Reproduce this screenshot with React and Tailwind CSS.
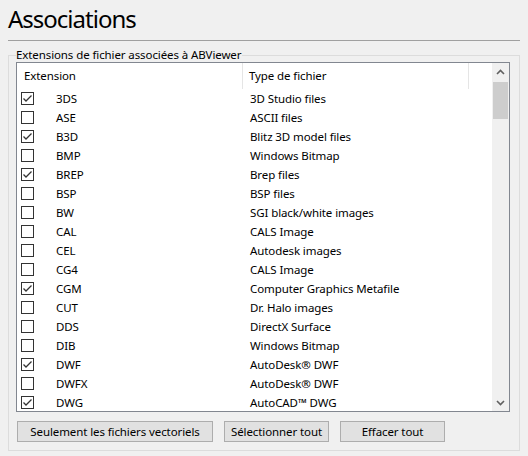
import React, { useState } from "react";

const ROWS = [
  ["3DS", "3D Studio files", true],
  ["ASE", "ASCII files", false],
  ["B3D", "Blitz 3D model files", true],
  ["BMP", "Windows Bitmap", false],
  ["BREP", "Brep files", true],
  ["BSP", "BSP files", false],
  ["BW", "SGI black/white images", false],
  ["CAL", "CALS Image", false],
  ["CEL", "Autodesk images", false],
  ["CG4", "CALS Image", false],
  ["CGM", "Computer Graphics Metafile", true],
  ["CUT", "Dr. Halo images", false],
  ["DDS", "DirectX Surface", false],
  ["DIB", "Windows Bitmap", false],
  ["DWF", "AutoDesk® DWF", true],
  ["DWFX", "AutoDesk® DWF", false],
  ["DWG", "AutoCAD™ DWG", true],
];

const CheckBox = ({ checked, onChange }) => (
  <button
    onClick={onChange}
    className="w-[13px] h-[13px] border border-[#333333] bg-white flex items-center justify-center shrink-0"
  >
    {checked && (
      <svg width="11" height="11" viewBox="0 0 11 11">
        <path d="M1.5 5.5 L4 8 L9.5 2.5" fill="none" stroke="#333333" strokeWidth="1.3" />
      </svg>
    )}
  </button>
);

const App = () => {
  const [rows, setRows] = useState(ROWS);

  const toggle = (i) =>
    setRows(rows.map((r, j) => (j === i ? [r[0], r[1], !r[2]] : r)));

  return (
    <div
      className="w-[528px] h-[456px] bg-[#f0f0f0] text-[11.5px] tracking-[-0.1px] text-black overflow-hidden"
      style={{ fontFamily: '"Noto Sans", "Open Sans", sans-serif' }}
    >
      <div className="h-[40px] px-[8px] pt-[4px] text-[24px] leading-[30px] tracking-[-1px]">
        Associations
      </div>
      <div className="mx-[8px] border-t border-[#a0a0a0]" />

      <fieldset className="mt-[7px] mx-[8px] h-[403px] border border-[#dcdcdc]">
        <legend className="ml-[7px] leading-[14px] pr-[1px]">
          Extensions de fichier associées à ABViewer
        </legend>

        {/* List */}
        <div className="ml-[7px] w-[494px] h-[350px] border border-[#828790] bg-white flex overflow-hidden">
          <div className="flex-1 overflow-hidden">
            <div className="h-[26px] flex items-center">
              <div className="w-[226px] h-full pl-[7px] flex items-center border-r border-[#e5e5e5]">
                Extension
              </div>
              <div className="w-[226px] h-full pl-[6px] flex items-center border-r border-[#e5e5e5]">
                Type de fichier
              </div>
            </div>
            {rows.map(([ext, type, checked], i) => (
              <div key={ext} className="h-[19px] flex items-center">
                <div className="w-[226px] flex items-center pl-[4px]">
                  <CheckBox checked={checked} onChange={() => toggle(i)} />
                  <span className="ml-[22px]">{ext}</span>
                </div>
                <div className="pl-[7px]">{type}</div>
              </div>
            ))}
          </div>

          {/* Scrollbar */}
          <div className="w-[17px] h-full bg-[#f0f0f0] flex flex-col">
            <div className="h-[17px] flex items-center justify-center">
              <svg width="9" height="6" viewBox="0 0 9 6">
                <path d="M1 5 L4.5 1.5 L8 5" fill="none" stroke="#606060" strokeWidth="1.6" />
              </svg>
            </div>
            <div className="mt-[2px] mx-[1px] h-[37px] bg-[#cdcdcd]" />
            <div className="flex-1" />
            <div className="h-[17px] flex items-center justify-center">
              <svg width="9" height="6" viewBox="0 0 9 6">
                <path d="M1 1 L4.5 4.5 L8 1" fill="none" stroke="#606060" strokeWidth="1.6" />
              </svg>
            </div>
          </div>
        </div>

        {/* Buttons */}
        <div className="mt-[9px] ml-[8px] flex gap-[11px]">
          <button className="w-[196px] h-[21px] bg-[#e1e1e1] border border-[#adadad]">
            Seulement les fichiers vectoriels
          </button>
          <button className="w-[105px] h-[21px] bg-[#e1e1e1] border border-[#adadad]">
            Sélectionner tout
          </button>
          <button className="w-[105px] h-[21px] bg-[#e1e1e1] border border-[#adadad]">
            Effacer tout
          </button>
        </div>
      </fieldset>
    </div>
  );
};

export default App;
